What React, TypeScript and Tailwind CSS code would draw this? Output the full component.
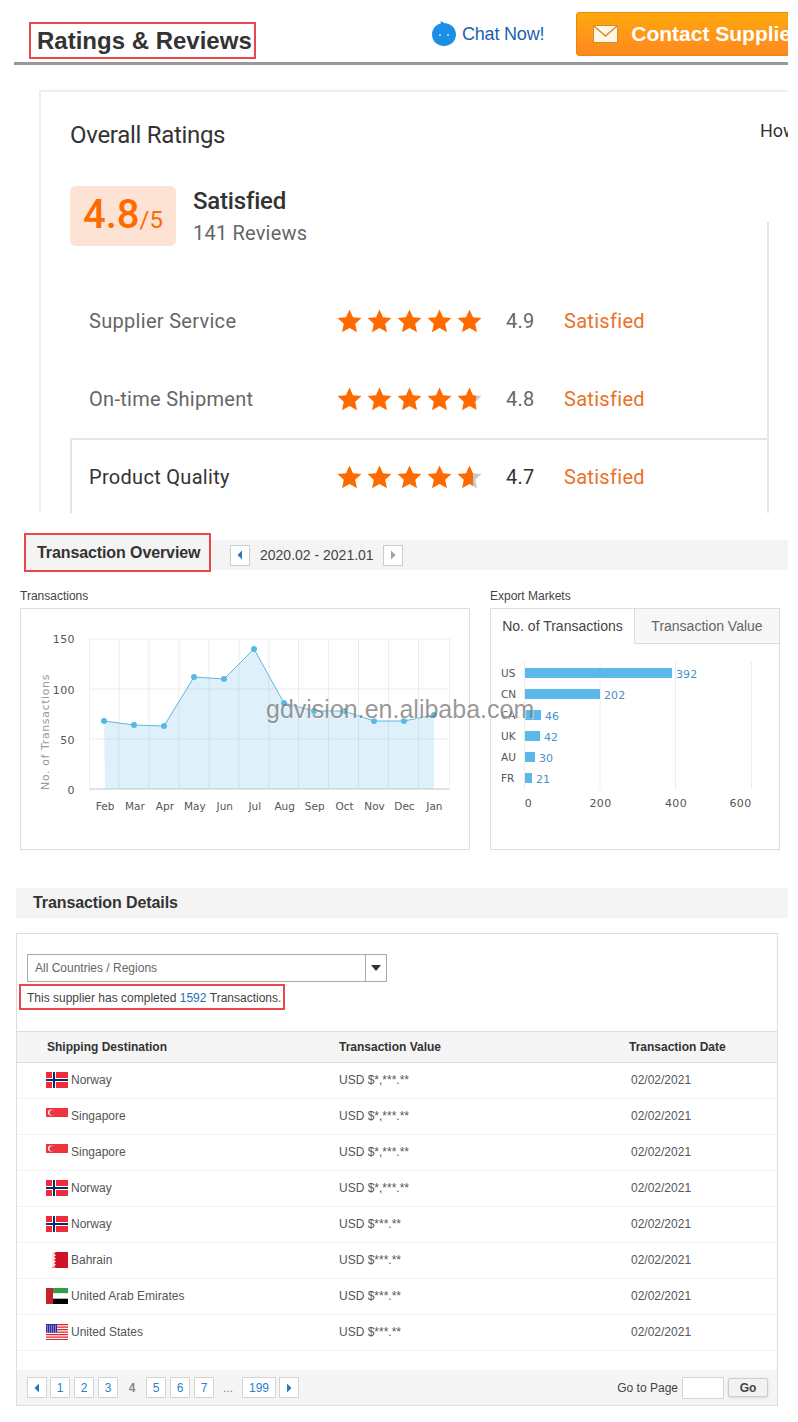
const ratings = [
  { label: 'Supplier Service', score: '4.9', last: 100 },
  { label: 'On-time Shipment', score: '4.8', last: 76 },
];

const transactionPoints = [
  [104, 721], [134, 725], [164, 726], [194, 677], [224, 679], [254, 649],
  [284, 703], [314, 711], [344, 711], [374, 721], [404, 721], [434, 715],
];
const months = ['Feb', 'Mar', 'Apr', 'May', 'Jun', 'Jul', 'Aug', 'Sep', 'Oct', 'Nov', 'Dec', 'Jan'];

const markets = [
  { code: 'US', value: 392, y: 668, end: 672 },
  { code: 'CN', value: 202, y: 689, end: 600 },
  { code: 'CA', value: 46, y: 710, end: 541 },
  { code: 'UK', value: 42, y: 731, end: 540 },
  { code: 'AU', value: 30, y: 752, end: 535 },
  { code: 'FR', value: 21, y: 773, end: 532 },
];

const rows = [
  { flag: 'no', country: 'Norway', value: 'USD $*,***.**' },
  { flag: 'sg', country: 'Singapore', value: 'USD $*,***.**' },
  { flag: 'sg', country: 'Singapore', value: 'USD $*,***.**' },
  { flag: 'no', country: 'Norway', value: 'USD $*,***.**' },
  { flag: 'no', country: 'Norway', value: 'USD $***.**' },
  { flag: 'bh', country: 'Bahrain', value: 'USD $***.**' },
  { flag: 'ae', country: 'United Arab Emirates', value: 'USD $***.**' },
  { flag: 'us', country: 'United States', value: 'USD $***.**' },
];

function Star({ fill = 100, id }: { fill?: number; id: string }) {
  return (
    <svg width="25" height="24" viewBox="0 0 25 24" className="shrink-0">
      <defs>
        <linearGradient id={id}>
          <stop offset={`${fill}%`} stopColor="#ff6a00" />
          <stop offset={`${fill}%`} stopColor="#c8c8c8" />
        </linearGradient>
      </defs>
      <path
        d="M12.5 0.5L16 8.150L24.500 9L18.200 14.850L20 23.200L12.500 19L5 23.200L6.800 14.850L0.500 9L9 8.150z"
        fill={`url(#${id})`}
      />
    </svg>
  );
}

function RatingRow({ label, score, last, dark }: { label: string; score: string; last: number; dark?: boolean }) {
  return (
    <div className="flex items-center">
      <span className={`w-[248px] text-[20px] tracking-[0.3px] ${dark ? 'text-[#333]' : 'text-[#666]'}`}>{label}</span>
      <div className="flex w-[169px] gap-[5px]">
        {[100, 100, 100, 100, last].map((f, i) => (
          <Star key={i} fill={f} id={`star-${score}-${i}`} />
        ))}
      </div>
      <span className={`w-[58px] text-[20px] tracking-[0.3px] ${dark ? 'text-[#333]' : 'text-[#666]'}`}>{score}</span>
      <span className="text-[20px] tracking-[0.3px] text-[#e9722a]">Satisfied</span>
    </div>
  );
}

function Arrow({ left, active }: { left?: boolean; active?: boolean }) {
  return (
    <svg width="6" height="10" viewBox="0 0 6 10">
      <path d={left ? 'M5 0.5v9L0.5 5z' : 'M1 0.5v9L5.5 5z'} fill={active ? '#2a77bd' : '#9aa5ad'} />
    </svg>
  );
}

function Flag({ code }: { code: string }) {
  if (code === 'no') {
    return (
      <svg width="22" height="16" viewBox="0 0 22 16">
        <rect width="22" height="16" fill="#ef2b3d" />
        <rect x="6" width="4" height="16" fill="#fff" />
        <rect y="6" width="22" height="4" fill="#fff" />
        <rect x="7" width="2" height="16" fill="#0c2a63" />
        <rect y="7" width="22" height="2" fill="#0c2a63" />
      </svg>
    );
  }
  if (code === 'sg') {
    return (
      <svg width="22" height="16" viewBox="0 0 22 16">
        <rect width="22" height="9" fill="#ef3340" />
        <circle cx="5" cy="4.500" r="3" fill="#fff" />
        <circle cx="6" cy="4.500" r="2.600" fill="#ef3340" />
      </svg>
    );
  }
  if (code === 'bh') {
    return (
      <svg width="22" height="16" viewBox="0 0 22 16">
        <rect x="6" width="16" height="16" fill="#ce1126" />
        <path d="M6 0h4L8 1.600l2 1.600-2 1.600 2 1.600-2 1.600 2 1.600-2 1.600 2 1.600-2 1.600 2 1.200H6z" fill="#fbe3e3" />
      </svg>
    );
  }
  if (code === 'ae') {
    return (
      <svg width="22" height="16" viewBox="0 0 22 16">
        <rect x="7" width="15" height="5.400" fill="#2f9e44" />
        <rect x="7" y="5.400" width="15" height="5.300" fill="#fff" />
        <rect x="7" y="10.700" width="15" height="5.300" fill="#000" />
        <rect width="7" height="16" fill="#c8202f" />
      </svg>
    );
  }
  return (
    <svg width="22" height="16" viewBox="0 0 22 16">
      <rect width="22" height="16" fill="#fff" />
      {[0, 2.5, 5, 7.5, 10, 12.5, 15].map((y) => (
        <rect key={y} y={y} width="22" height="1.250" fill="#e0202c" />
      ))}
      <rect width="11" height="8.600" fill="#2b2fa3" />
      {[1.5, 3.5, 5.5, 7.5].map((y) =>
        [1, 3, 5, 7, 9].map((x) => <rect key={`${x}-${y}`} x={x} y={y} width="1" height="1" fill="#cfd3f5" />),
      )}
    </svg>
  );
}

function TransactionsChart() {
  const line = transactionPoints.map((p) => p.join(',')).join(' ');
  const area = `105,789 ${line} 434,789`;
  const gridX = [119, 149, 179, 209, 239, 269, 298.5, 328.5, 358.5, 388.5, 418.5];
  return (
    <svg width="448" height="240" viewBox="21 609 448 240" className="block">
      <rect x="89.500" y="639" width="360" height="150" fill="#fff" stroke="#efefef" />
      {gridX.map((x) => (
        <line key={x} x1={x} x2={x} y1="639" y2="789" stroke="#ececec" />
      ))}
      <line x1="89.500" x2="449" y1="689" y2="689" stroke="#ececec" />
      <line x1="89.500" x2="449" y1="739" y2="739" stroke="#ececec" />
      <polygon points={area} fill="#5bb8e8" fillOpacity="0.2" />
      <line x1="89.500" x2="449" y1="789" y2="789" stroke="#c3d0da" />
      <polyline points={line} fill="none" stroke="#5bb8e0" strokeWidth="1" />
      {transactionPoints.map(([x, y]) => (
        <circle key={x} cx={x} cy={y} r="3" fill="#5bb8e4" />
      ))}
      <g fontFamily="'DejaVu Sans', sans-serif" fontSize="11" fill="#555">
        {[['150', 643], ['100', 694], ['50', 744], ['0', 794]].map(([t, y]) => (
          <text key={t} x="75" y={y} textAnchor="end" letterSpacing="0.4">{t}</text>
        ))}
        {months.map((m, i) => (
          <text key={m} x={105 + i * 29.95} y="810" textAnchor="middle" fontSize="10.5">{m}</text>
        ))}
        <text x="0" y="0" fill="#999" fontSize="11" letterSpacing="0.6" textAnchor="middle" transform="translate(49 732) rotate(-90)">
          No. of Transactions
        </text>
      </g>
    </svg>
  );
}

function MarketsChart() {
  return (
    <svg width="288" height="205" viewBox="491 644 288 205" className="block">
      {[524.5, 600, 675.5, 751.5].map((x) => (
        <line key={x} x1={x} x2={x} y1="662" y2="789" stroke="#ececec" />
      ))}
      <g fontFamily="'DejaVu Sans', sans-serif" fontSize="11">
        {markets.map((m) => (
          <g key={m.code}>
            <text x="501" y={m.y + 9} fill="#555" fontSize="10.5">{m.code}</text>
            <rect x="525" y={m.y} width={m.end - 525} height="10" fill="#5bb8e8" />
            <text x={m.end + 4} y={m.y + 9.5} fill="#4a90c8" letterSpacing="0.1">{m.value}</text>
          </g>
        ))}
        {[['0', 528.5], ['200', 600.5], ['400', 676], ['600', 740.5]].map(([t, x]) => (
          <text key={t} x={x} y="807" fill="#555" textAnchor="middle" letterSpacing="0.4">{t}</text>
        ))}
      </g>
    </svg>
  );
}

function PageLink({ children, w = 'w-[20px]' }: { children: React.ReactNode; w?: string }) {
  return (
    <span className={`flex h-[21px] ${w} items-center justify-center border border-[#d4d4d4] bg-white text-[12px] text-[#2a7fc9]`}>
      {children}
    </span>
  );
}

export default function App() {
  return (
    <div className="relative h-[1422px] w-[798px] overflow-hidden bg-white font-['Liberation_Sans',Arial,sans-serif]">
      {/* header */}
      <div className="ml-[14px] flex h-[65px] w-[774px] overflow-hidden border-b-[3px] border-[#999]">
        <div className="ml-[15px] mt-[22px] flex h-[37px] w-[227px] shrink-0 items-center border-2 border-[#e8474c] pl-[6px] text-[24px] font-bold leading-none text-[#333]">
          Ratings &amp; Reviews
        </div>
        <div className="ml-[176px] mt-[21px] flex h-[26px] shrink-0 items-center gap-[6px]">
          <svg width="24" height="26" viewBox="0 0 24 26">
            <path d="M9 2.200c-.2-.7-.3-1.200-.6-1.900 1.200.1 2.500.8 3.400 1.700 6.800 0 12.200 5 12.200 11.500S18.800 25 12 25 0 20 0 13.500C0 8 3.800 3.500 9 2.200z" fill="#1b8fe6" />
            <circle cx="8" cy="14" r="1" fill="#cfe9fb" />
            <circle cx="16" cy="14" r="1" fill="#cfe9fb" />
          </svg>
          <span className="text-[18px] tracking-[-0.2px] text-[#1a5fb0]">Chat Now!</span>
        </div>
        <div className="ml-[32px] mt-[12px] flex h-[44px] w-[240px] shrink-0 items-center rounded-[3px] border border-[#e58a10] bg-gradient-to-b from-[#ffa80a] to-[#ff881f] pl-[16px] text-[21px] font-bold text-white">
          <svg width="25" height="18" viewBox="0 0 25 18" className="mr-[13px] shrink-0">
            <rect x="0.500" y="0.500" width="24" height="17" fill="#fff6e6" stroke="#d58a2a" />
            <path d="M1 1l11.500 10L24 1" fill="none" stroke="#d58a2a" strokeWidth="1.5" />
          </svg>
          <span className="whitespace-nowrap">Contact Supplier</span>
        </div>
      </div>

      {/* overall ratings */}
      <div className="ml-[39px] mt-[25px] h-[423px] w-[749px] overflow-hidden border-l-2 border-t-2 border-[#eee] pl-[29px] font-['Roboto',sans-serif]">
        <div className="flex h-[94px] pt-[27px]">
          <h2 className="w-[690px] shrink-0 text-[24px] leading-[32px] tracking-[-0.3px] text-[#333]">Overall Ratings</h2>
          <span className="whitespace-nowrap text-[18px] leading-[24px] text-[#333]">How</span>
        </div>
        <div className="flex h-[60px]">
          <div className="flex h-[60px] w-[106px] items-baseline justify-center rounded-[6px] bg-[#fde3d3] pt-[3px] text-[#ff6a00]">
            <span className="text-[40px] font-medium leading-[52px]">4.8</span>
            <span className="text-[24px]">/5</span>
          </div>
          <div className="ml-[17px]">
            <div className="text-[24px] font-medium leading-[30px] tracking-[-0.2px] text-[#333]">Satisfied</div>
            <div className="mt-[1px] text-[20px] leading-[32px] tracking-[0.2px] text-[#666]">141 Reviews</div>
          </div>
          <div className="ml-auto mr-[19px] h-[24px] self-end border-r-2 border-[#e6e6e6]" />
        </div>
        <div className="mr-[19px] border-r-2 border-[#e6e6e6] pt-[36px]">
          {ratings.map((r) => (
            <div key={r.label} className="flex h-[78px] items-center pl-[19px]">
              <RatingRow {...r} />
            </div>
          ))}
        </div>
        <div className="mr-[19px] h-[100px] border-l-2 border-r-2 border-t-2 border-[#e6e6e6] pl-[17px] pt-[22px]">
          <RatingRow label="Product Quality" score="4.7" last={66} dark />
        </div>
      </div>

      {/* transaction overview */}
      <div className="ml-[24px] mt-[20px] flex h-[39px] w-[764px] items-start">
        <div className="flex h-[39px] w-[187px] shrink-0 items-center border-2 border-[#e8474c] bg-[#f4f4f4] pl-[11px] text-[16px] font-bold tracking-[-0.1px] text-[#333]">
          Transaction Overview
        </div>
        <div className="mt-[7px] flex h-[30px] flex-1 items-center bg-[#f4f4f4] pl-[19px] text-[14px] text-[#444]">
          <span className="flex h-[21px] w-[20px] items-center justify-center border border-[#ccc] bg-white">
            <Arrow left active />
          </span>
          <span className="ml-[10px] w-[123px]">2020.02 - 2021.01</span>
          <span className="flex h-[21px] w-[20px] items-center justify-center border border-[#ccc] bg-white">
            <Arrow />
          </span>
        </div>
      </div>

      {/* charts */}
      <div className="ml-[20px] mt-[17px] flex gap-[20px]">
        <div className="w-[450px]">
          <div className="h-[19px] text-[12px] leading-[15px] text-[#444]">Transactions</div>
          <div className="h-[242px] border border-[#ddd]">
            <TransactionsChart />
          </div>
        </div>
        <div className="w-[290px]">
          <div className="h-[19px] text-[12px] leading-[15px] text-[#444]">Export Markets</div>
          <div className="h-[242px] border border-[#ddd]">
            <div className="flex h-[35px] text-[14px]">
              <div className="flex w-[143px] items-center justify-center text-[#444]">No. of Transactions</div>
              <div className="flex flex-1 items-center justify-center border-b border-l border-[#ddd] bg-[#f7f7f7] text-[#666]">
                Transaction Value
              </div>
            </div>
            <MarketsChart />
          </div>
        </div>
      </div>

      {/* transaction details */}
      <div className="ml-[16px] mt-[38px] flex h-[30px] w-[772px] items-center bg-[#f4f4f4] pl-[17px] text-[16px] font-bold tracking-[-0.1px] text-[#333]">
        Transaction Details
      </div>
      <div className="ml-[16px] mt-[15px] flex h-[473px] w-[762px] flex-col border border-[#ddd] text-[12px] text-[#555]">
        <div className="ml-[10px] mt-[20px] flex h-[28px] w-[360px] border border-[#aaa] bg-white">
          <div className="flex flex-1 items-center pl-[7px] text-[#666]">All Countries / Regions</div>
          <div className="flex w-[21px] items-center justify-center border-l border-[#aaa]">
            <svg width="10" height="6" viewBox="0 0 10 6">
              <path d="M0 0h10L5 6z" fill="#333" />
            </svg>
          </div>
        </div>
        <div className="ml-[2px] mt-[2px] flex h-[26px] w-[266px] items-center border-2 border-[#e8474c] pl-[6px] pt-[2px] text-[#444]">
          This supplier has completed&nbsp;<span className="text-[#2a6fb5]">1592</span>&nbsp;Transactions.
        </div>
        <div className="mt-[21px] flex h-[32px] shrink-0 items-center border-y border-[#ddd] bg-[#f5f5f5] font-bold text-[#333]">
          <span className="w-[322px] pl-[30px]">Shipping Destination</span>
          <span className="w-[290px]">Transaction Value</span>
          <span>Transaction Date</span>
        </div>
        {rows.map((r, i) => (
          <div key={i} className="flex h-[36px] shrink-0 items-center border-b border-[#f2f2f2] pb-[1px]">
            <div className="flex w-[322px] items-center gap-[3px] pl-[29px]">
              <Flag code={r.flag} />
              <span>{r.country}</span>
            </div>
            <span className="w-[292px]">{r.value}</span>
            <span>02/02/2021</span>
          </div>
        ))}
        <div className="mt-auto flex h-[35px] items-center bg-[#f5f5f5] pl-[10px] pr-[9px]">
          <PageLink><Arrow left active /></PageLink>
          <div className="ml-[3px] flex items-center gap-[4px]">
            <PageLink>1</PageLink>
            <PageLink>2</PageLink>
            <PageLink>3</PageLink>
            <span className="w-[20px] text-center font-bold text-[#888]">4</span>
            <PageLink>5</PageLink>
            <PageLink>6</PageLink>
            <PageLink>7</PageLink>
            <span className="w-[20px] text-center text-[#888]">...</span>
            <PageLink w="w-[34px]">199</PageLink>
          </div>
          <div className="ml-[3px]">
            <PageLink><Arrow active /></PageLink>
          </div>
          <div className="ml-auto flex items-center gap-[4px]">
            <span className="text-[#444]">Go to Page</span>
            <span className="h-[22px] w-[42px] border border-[#d4d4d4] bg-white" />
            <span className="flex h-[19px] w-[40px] items-center justify-center rounded-[2px] border border-[#ccc] bg-[#f2f2f2] font-bold text-[#444] shadow-sm">
              Go
            </span>
          </div>
        </div>
      </div>

      {/* watermark */}
      <div className="pointer-events-none absolute left-[266px] top-[694px] whitespace-nowrap text-[25px] leading-[30px] text-[#6b6b6b]/70 [text-shadow:1px_1px_1px_rgba(255,255,255,0.6)]">
        gdvision.en.alibaba.com
      </div>
    </div>
  );
}
